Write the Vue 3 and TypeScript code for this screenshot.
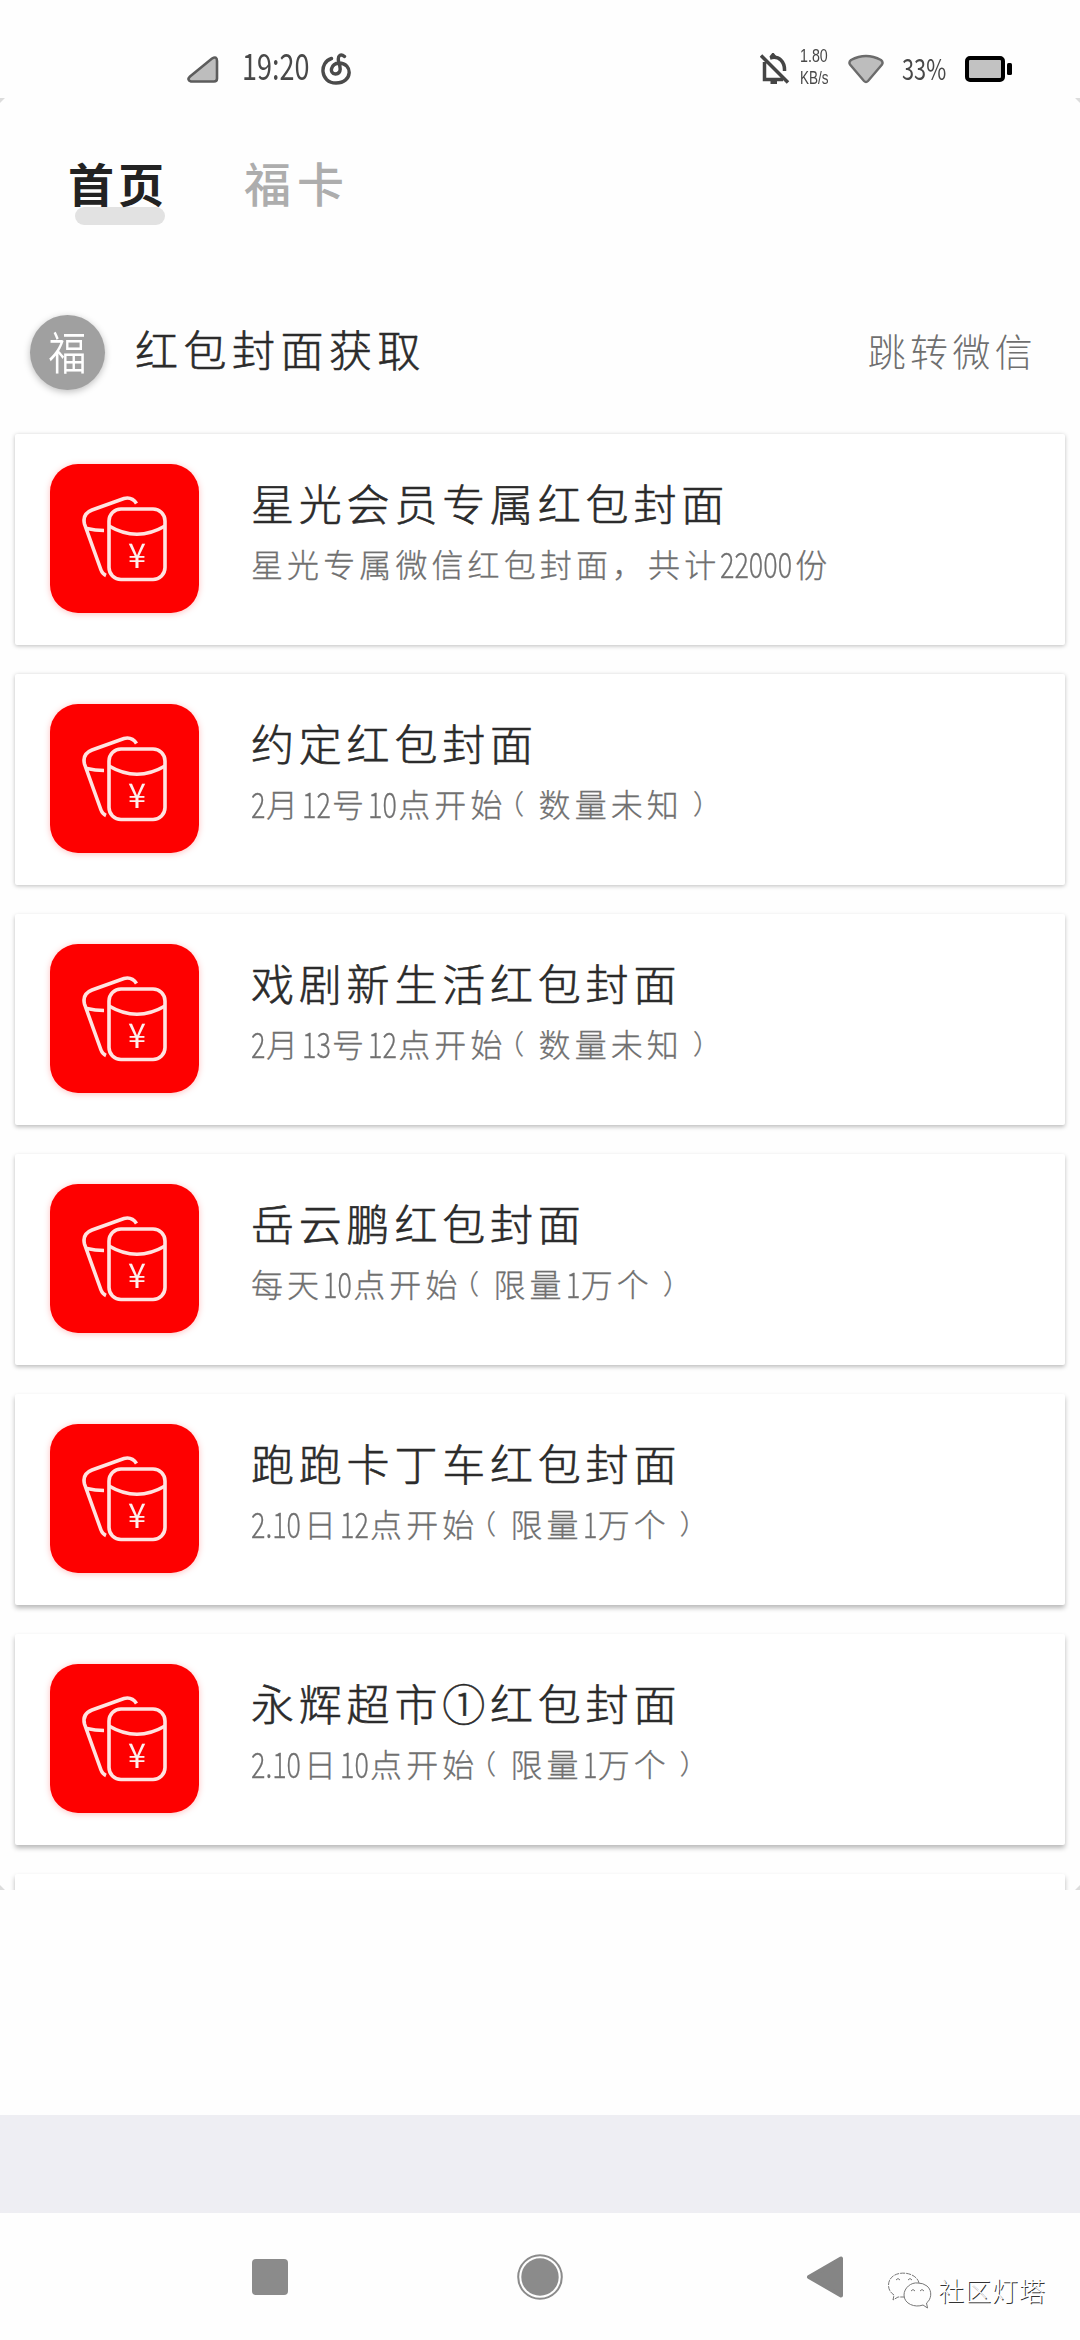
<script setup lang="ts">
interface Cover {
  title: string
  note: string
}

interface Run {
  text: string
  kind: 'han' | 'num' | 'open' | 'close'
  width?: string
}

const covers: Cover[] = [
  { title: '星光会员专属红包封面', note: '星光专属微信红包封面，共计22000份' },
  { title: '约定红包封面', note: '2月12号10点开始（数量未知）' },
  { title: '戏剧新生活红包封面', note: '2月13号12点开始（数量未知）' },
  { title: '岳云鹏红包封面', note: '每天10点开始（限量1万个）' },
  { title: '跑跑卡丁车红包封面', note: '2.10日12点开始（限量1万个）' },
  { title: '永辉超市①红包封面', note: '2.10日10点开始（限量1万个）' },
]

// Condensed digits: each takes 15px, a point takes 8px.
function numWidth(text: string): string {
  const total = [...text].reduce((sum, c) => sum + (c === '.' ? 8 : 15), 0)
  return `${total}px`
}

// Digits and brackets get their own metrics, so a note is split into runs.
function runs(note: string): Run[] {
  const parts = note.match(/[\d.]+|（|）|[^\d.（）]+/g) ?? []
  return parts.map((text): Run => {
    if (/^[\d.]+$/.test(text)) return { text, kind: 'num', width: numWidth(text) }
    if (text === '（') return { text, kind: 'open' }
    if (text === '）') return { text, kind: 'close' }
    return { text, kind: 'han' }
  })
}
</script>

<template>
  <div class="screen">
    <header class="status">
      <svg class="signal" viewBox="0 0 34 30" width="34" height="30">
        <path d="M4 22.5 L26 4.5 Q31 1.5 31 7 V24.500 Q31 27.500 28 27.500 H5 Q0.500 26 4 22.500Z" fill="#bdbdbd" stroke="#5c5c5c" stroke-width="2.600" />
      </svg>
      <span class="time"><span class="slim">19:20</span></span>
      <svg class="music" viewBox="0 0 30 34" width="30" height="34" fill="none" stroke="#4a4a4a" stroke-width="3.400" stroke-linecap="round">
        <path d="M10.500 6.500 C-2 10 -1 31 15 31 C32 31 32 11 18 11 C10 11.500 7.500 21.500 14.500 22 C21.500 21.500 19 14 17.500 9 C16.500 3 20 1.500 23.500 4.500" />
      </svg>
      <span class="spacer"></span>
      <svg class="bell" viewBox="0 0 30 32" width="30" height="32" fill="none" stroke="#454545" stroke-width="3.500">
        <path d="M4.500 9 V26.500 H23 M10 5 C19 2 25 9 24.500 18 M1 2.500 L28 29.500" />
        <path d="M11 4 L13 1.500 L15 4 M10.500 29.500 H17" stroke-width="3" />
      </svg>
      <span class="speed"><span class="slim">1.80</span><span class="slim unit">KB/s</span></span>
      <svg class="wifi" viewBox="0 0 36 30" width="36" height="30">
        <path d="M3 6 Q18 -2 33 6 Q35.500 8 34 10.500 L20 27 Q18 29 16 27 L2 10.500 Q0.500 8 3 6Z" fill="#bdbdbd" stroke="#6b6b6b" stroke-width="2.400" />
      </svg>
      <span class="percent"><span class="slim">33%</span></span>
      <svg class="battery" viewBox="0 0 48 28" width="48" height="28">
        <rect x="2" y="3" width="36" height="22" rx="3" fill="#c2c2c2" stroke="#000" stroke-width="4" />
        <rect x="42" y="8" width="5" height="12" rx="1.500" fill="#000" />
      </svg>
    </header>

    <main class="page">
      <nav class="tabs">
        <span class="tab active">首页</span>
        <span class="tab">福卡</span>
      </nav>

      <section class="heading">
        <span class="avatar"><span class="fu">福</span></span>
        <h1>红包封面获取</h1>
        <span class="jump">跳转微信</span>
      </section>

      <ul class="list">
        <li v-for="cover in covers" :key="cover.title" class="card">
          <svg class="tile" viewBox="0 0 149 149" width="149" height="149">
            <rect width="149" height="149" rx="28" fill="#fe0000" />
            <g fill="none" stroke="#ffe3e0" stroke-width="3.600">
              <rect x="59" y="45" width="56" height="70.500" rx="12" />
              <path d="M59 62 Q87 78.500 115 62" />
              <path d="M86.500 39.500 Q82 32.500 74 34.500 L42 46 Q32 50 34.500 60 L51 106 Q52.500 110 56 111.500 M37 64.500 Q45 66.500 54 66.500" />
            </g>
            <text x="78" y="104" textLength="18" lengthAdjust="spacingAndGlyphs">¥</text>
          </svg>
          <div class="info">
            <h2>{{ cover.title }}</h2>
            <p>
              <span v-for="(run, i) in runs(cover.note)" :key="i" :class="run.kind" :style="{ width: run.width }"><span class="glyphs">{{ run.text }}</span></span>
            </p>
          </div>
        </li>
        <li class="card"></li>
      </ul>
    </main>

    <div class="blank"></div>
    <div class="band"></div>

    <footer class="nav">
      <svg class="recent" viewBox="0 0 36 36" width="36" height="36"><rect width="36" height="36" rx="4" fill="#8b8b8b" /></svg>
      <svg class="home" viewBox="0 0 46 46" width="46" height="46">
        <circle cx="23" cy="23" r="21.800" fill="none" stroke="#8b8b8b" stroke-width="2" />
        <circle cx="23" cy="23" r="18.700" fill="#8b8b8b" />
      </svg>
      <svg class="back" viewBox="0 0 38 44" width="38" height="44">
        <path d="M3 22 L35 3.500 V40.500Z" fill="#858585" stroke="#858585" stroke-width="4" stroke-linejoin="round" />
      </svg>
      <div class="mark">
        <svg viewBox="0 0 46 38" width="46" height="38" fill="none" stroke="#777" stroke-width="1">
          <path d="M32 12 C29 -1 2 -2 1.500 14 C1.500 19 4 22 7 24 L6 29 L11 26 L17 26" stroke-dasharray="5 1" />
          <path d="M31 12 C24 11 17 17 17 24 C17 33 28 37 36 34 L40.500 37 L39.500 32 C44 29 46 20 40 15 Q36 12 31 12Z" />
          <path d="M9 9 q2 -3 4 0 M21 9 q2 -3 4 0 M24 20 q2 -3 4 0 M33 20 q2 -3 4 0" />
        </svg>
        <span>社区灯塔</span>
      </div>
    </footer>
  </div>
</template>

<style>
body {
  background: #fefefe;
}
</style>

<style scoped>
.screen {
  width: 1080px;
  height: 2340px;
  display: flex;
  flex-direction: column;
  overflow: hidden;
  background: #fefefe;
  color: #2b2b2b;
  font-family: 'Noto Sans CJK SC', sans-serif;
  font-weight: 300;
}

.status {
  height: 98px;
  box-sizing: border-box;
  padding: 48px 67px 8px 186px;
  display: flex;
  align-items: center;
  flex: none;
  color: #484848;
  font-weight: 400;
}
.slim {
  display: inline-block;
  transform: scaleX(0.75);
  transform-origin: 0 50%;
  white-space: nowrap;
}
.time {
  width: 67px;
  margin: -10px 12px 0 22px;
  font-size: 36px;
  line-height: 40px;
}
.spacer {
  flex: 1;
}
.speed {
  width: 31px;
  margin-left: 10px;
  display: flex;
  flex-direction: column;
  align-items: flex-start;
  font-family: 'Liberation Sans', sans-serif;
  font-size: 19px;
  line-height: 23px;
  margin-top: -5px;
}
.unit {
  font-size: 18px;
}
.wifi {
  margin-left: 17px;
}
.percent {
  width: 44px;
  margin: -4px 19px 0 18px;
  font-size: 29px;
  line-height: 34px;
}

.page {
  position: relative;
  height: 1792px;
  flex: none;
  overflow: hidden;
}
.page::before {
  content: '';
  position: absolute;
  inset: 0;
  pointer-events: none;
  background:
    linear-gradient(135deg, #dcdcdc 3px, transparent 4px) 0 0 / 8px 8px no-repeat,
    linear-gradient(225deg, #dcdcdc 3px, transparent 4px) 100% 0 / 8px 8px no-repeat,
    linear-gradient(45deg, #dcdcdc 3px, transparent 4px) 0 100% / 8px 8px no-repeat,
    linear-gradient(315deg, #dcdcdc 3px, transparent 4px) 100% 100% / 8px 8px no-repeat;
}

.tabs {
  height: 192px;
  box-sizing: border-box;
  padding: 54px 0 0 68px;
  display: flex;
  align-items: flex-start;
  gap: 76px;
}
.tab {
  position: relative;
  font-size: 47px;
  line-height: 60px;
  letter-spacing: 6px;
  font-weight: 500;
  color: #adadad;
}
.tab.active {
  z-index: 0;
  color: #222;
  font-weight: 700;
  font-size: 46px;
  letter-spacing: 4px;
}
.tab.active::before {
  content: '';
  position: absolute;
  z-index: -1;
  left: 7px;
  top: 55px;
  width: 90px;
  height: 18px;
  border-radius: 9px;
  background: #e2e2e2;
}

.heading {
  height: 143px;
  box-sizing: border-box;
  padding: 25px 43px 0 30px;
  display: flex;
  align-items: flex-start;
}
.avatar {
  width: 75px;
  height: 75px;
  border-radius: 50%;
  background: #a0a0a0;
  box-shadow: 0 2px 7px rgba(0, 0, 0, 0.25);
  color: #fff;
  font-size: 45px;
  line-height: 71px;
  text-align: center;
  font-weight: 350;
}
.fu {
  display: inline-block;
  transform: scaleX(0.84);
}
h1,
h2 {
  margin: 0;
  font-size: 43px;
  line-height: 60px;
  letter-spacing: 4.8px;
  font-weight: 300;
  -webkit-text-stroke: 0.6px currentColor;
  white-space: nowrap;
}
h1 {
  flex: 1;
  margin: 3px 0 0 30px;
  letter-spacing: 5.5px;
}
.jump {
  margin-top: 5px;
  font-size: 38px;
  line-height: 60px;
  letter-spacing: 4.3px;
  color: #6f6f6f;
}

.list {
  list-style: none;
  margin: 0;
  padding: 1px 15px 0;
  display: flex;
  flex-direction: column;
  gap: 29px;
}
.card {
  height: 211px;
  flex: none;
  box-sizing: border-box;
  padding: 30px 35px;
  display: flex;
  align-items: flex-start;
  background: #fff;
  border-radius: 2px;
  box-shadow: 0 1px 4px rgba(0, 0, 0, 0.26);
}
.card:nth-child(n + 3) {
  box-shadow: 0 2px 4px rgba(0, 0, 0, 0.26);
}
.card:nth-child(n + 5) {
  box-shadow: 0 3px 5px rgba(0, 0, 0, 0.28);
}
.tile {
  flex: none;
  filter: drop-shadow(0 1px 3px rgba(255, 0, 0, 0.25));
}
.tile text {
  fill: #fff0ee;
  font-family: 'Noto Sans CJK SC', sans-serif;
  font-size: 34px;
  font-weight: 400;
}
.info {
  margin: 8px 0 0 52px;
}
p {
  margin: 4px 0 0;
  height: 54px;
  display: flex;
  font-size: 32px;
  line-height: 54px;
  letter-spacing: 4.1px;
  color: #707070;
  -webkit-text-stroke: 0.3px currentColor;
  white-space: nowrap;
}
.num {
  font-size: 35px;
  letter-spacing: 0;
}
.num .glyphs {
  display: inline-block;
  transform: scaleX(0.77);
  transform-origin: 0 50%;
}
.open,
.close {
  width: 32px;
  font-size: 27px;
  letter-spacing: 0;
  font-feature-settings: 'halt';
}
.open {
  text-indent: 4px;
}
.close {
  text-indent: 10px;
}

.blank {
  height: 225px;
  flex: none;
}
.band {
  height: 98px;
  flex: none;
  background: #eeeef3;
}
.nav {
  height: 127px;
  flex: none;
  display: flex;
  align-items: center;
  padding-left: 252px;
}
.home {
  margin-left: 229px;
}
.back {
  margin-left: 243px;
}
.mark {
  margin: 26px 0 0 43px;
  display: flex;
  align-items: center;
  gap: 5px;
  font-size: 26px;
  letter-spacing: 0.9px;
  line-height: 38px;
  font-weight: 300;
  color: #fff;
  text-shadow: 1px 1px 0 #333;
  white-space: nowrap;
}
</style>
